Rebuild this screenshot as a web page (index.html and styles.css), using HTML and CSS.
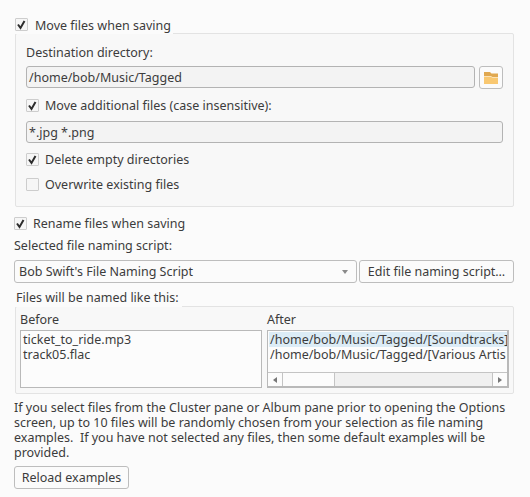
FILE: index.html
```html
<!DOCTYPE html>
<html lang="en">
<head>
    <meta charset="UTF-8">
    <meta name="viewport" content="width=device-width, initial-scale=1.0">
    <link rel="stylesheet" href="styles.css">
    <title>File naming options</title>
</head>
<body>
    <div class="page">

        <div class="check legend">
            <span class="box on"><svg viewBox="0 0 11 11"><path d="M2 5.5 L4.5 9 L8.5 2"/></svg></span>
            <span>Move files when saving</span>
        </div>
        <div class="group move">
            <div class="label">Destination directory:</div>
            <div class="dest_row">
                <div class="input">/home/bob/Music/Tagged</div>
                <button class="folder">
                    <svg viewBox="0 0 14 12" width="14" height="12">
                        <path fill="#e0a850" d="M0 0 H6 L7.5 1.5 H14 V5 H0 Z"/>
                        <path fill="#fbe3b8" d="M0 4 H7 L8.5 5 H14 V6 H0 Z"/>
                        <path fill="#f9c871" d="M0 5 H7 L8.5 6 H14 V12 H0 Z"/>
                    </svg>
                </button>
            </div>
            <div class="check">
                <span class="box on"><svg viewBox="0 0 11 11"><path d="M2 5.5 L4.5 9 L8.5 2"/></svg></span>
                <span>Move additional files (case insensitive):</span>
            </div>
            <div class="input">*.jpg *.png</div>
            <div class="check">
                <span class="box on"><svg viewBox="0 0 11 11"><path d="M2 5.5 L4.5 9 L8.5 2"/></svg></span>
                <span>Delete empty directories</span>
            </div>
            <div class="check">
                <span class="box"></span>
                <span>Overwrite existing files</span>
            </div>
        </div>

        <div class="check rename">
            <span class="box on"><svg viewBox="0 0 11 11"><path d="M2 5.5 L4.5 9 L8.5 2"/></svg></span>
            <span>Rename files when saving</span>
        </div>
        <div class="label script_label">Selected file naming script:</div>
        <div class="script_row">
            <div class="combo">
                <span>Bob Swift's File Naming Script</span>
                <span class="caret"></span>
            </div>
            <button class="btn edit">Edit file naming script…</button>
        </div>

        <div class="label named_label">Files will be named like this:</div>
        <div class="group examples">
            <div class="col">
                <div class="label">Before</div>
                <div class="list">
                    <div class="row">ticket_to_ride.mp3</div>
                    <div class="row">track05.flac</div>
                </div>
            </div>
            <div class="col">
                <div class="label">After</div>
                <div class="list after">
                    <div class="rows">
                        <div class="row sel">/home/bob/Music/Tagged/[Soundtracks]</div>
                        <div class="row">/home/bob/Music/Tagged/[Various Artis</div>
                    </div>
                    <div class="scrollbar">
                        <span class="arrow"><span class="tri left"></span></span>
                        <span class="thumb"></span>
                        <span class="track"></span>
                        <span class="arrow"><span class="tri right"></span></span>
                    </div>
                </div>
            </div>
        </div>

        <p class="help">If you select files from the Cluster pane or Album pane prior to opening the Options<br>screen, up to 10 files will be randomly chosen from your selection as file naming<br>examples.&nbsp; If you have not selected any files, then some default examples will be<br>provided.</p>
        <button class="btn reload">Reload examples</button>
    </div>
</body>
</html>
```
FILE: styles.css
```css
*{
    margin:0;
    padding:0;
    box-sizing: border-box;
}

body{
    background: #fbfbfb;
    color: #3c3c3c;
    font-family: "Noto Sans", "Liberation Sans", sans-serif;
    font-size: 12.5px;
    line-height: 15px;
    height: 497px;
    overflow: hidden;
}

.page{
    padding: 18px 16px 0 14px;
}

.check{
    display: flex;
    align-items: center;
    gap: 6px;
    height: 13px;
    white-space: nowrap;
}

.box{
    flex: none;
    width: 13px;
    height: 13px;
    background: #f6f6f6;
    border: 1px solid #cdcdcd;
    border-radius: 1px;
}

.box svg{
    display: block;
    width: 11px;
    height: 11px;
    fill: none;
    stroke: #2c2c2c;
    stroke-width: 2;
}

/* sits over the top border of the group below it */
.legend{
    position: relative;
    width: 158px;
    height: 16px;
    margin-left: 1px;
    margin-bottom: -1px;
    gap: 7px;
    align-items: flex-start;
    background: #fbfbfb;
}

.group{
    background: #f8f8f8;
    border: 1px solid #e3e3e3;
    border-radius: 2px;
    margin-left: 1px;
}

.move{
    height: 174px;
    padding: 11px 10px 0 10px;
}

.move .label{
    height: 15px;
    margin-bottom: 6px;
}

.dest_row{
    display: flex;
    gap: 4px;
    margin-bottom: 10px;
}

.input{
    flex: 1;
    height: 22px;
    line-height: 21px;
    padding-left: 2px;
    background: #f3f3f3;
    border: 1px solid #b3b3b3;
    border-radius: 3px;
    white-space: nowrap;
}

.move > .input{
    margin: 9px 0 10px 0;
}

.move .check + .check{
    margin-top: 12px;
}

.folder{
    flex: none;
    width: 24px;
    height: 23px;
    display: flex;
    align-items: center;
    justify-content: center;
    background: #fbfbfb;
    border: 1px solid #bdbdbd;
    border-radius: 3px;
}

.rename{
    margin-top: 10px;
}

.script_label{
    margin-top: 8px;
}

.script_row{
    display: flex;
    gap: 2px;
    margin-top: 7px;
}

.combo{
    width: 343px;
    height: 23px;
    display: flex;
    align-items: center;
    justify-content: space-between;
    padding: 0 8px 0 4px;
    background: #fbfbfb;
    border: 1px solid #bdbdbd;
    border-radius: 3px;
}

.caret{
    width: 0;
    height: 0;
    border-left: 3.5px solid transparent;
    border-right: 3.5px solid transparent;
    border-top: 4px solid #8a8a8a;
}

.btn{
    height: 23px;
    background: #fbfbfb;
    color: #3c3c3c;
    font: inherit;
    border: 1px solid #bdbdbd;
    border-radius: 3px;
}

.edit{
    width: 155px;
}

/* same as .legend, covers the group border */
.named_label{
    position: relative;
    width: 167px;
    height: 17px;
    margin: 7px 0 -1px 1px;
    padding-left: 1px;
    background: #fbfbfb;
}

.examples{
    height: 88px;
    display: grid;
    grid-template-columns: 242px 242px;
    gap: 5px;
    padding: 5px 4px 0 4px;
}

.col .label{
    height: 18px;
}

.list{
    height: 58px;
    background: #fcfcfc;
    border: 1px solid #b9b9b9;
    padding: 1px 3px 0 1px;
    overflow: hidden;
}

.row{
    white-space: nowrap;
    padding-left: 1px;
    height: 15px;
}

.list.after{
    display: flex;
    flex-direction: column;
    border-width: 1px 2px 2px 1px;
    padding: 0;
}

.rows{
    flex: 1;
    overflow: hidden;
    padding: 1px 0 0 1px;
}

.sel{
    background: #dcecf6;
    width: 238px;
    overflow: hidden;
}

.scrollbar{
    flex: none;
    display: flex;
    height: 14px;
    background: #f0f0f0;
    border-top: 1px solid #c4c4c4;
}

.arrow{
    flex: none;
    width: 14px;
    display: flex;
    align-items: center;
    justify-content: center;
    background: #fcfcfc;
}

.tri{
    width: 0;
    height: 0;
    border-top: 3.5px solid transparent;
    border-bottom: 3.5px solid transparent;
}

.tri.left{
    border-right: 4px solid #777;
}

.tri.right{
    border-left: 4px solid #777;
}

.thumb{
    flex: none;
    width: 53px;
    background: #fcfcfc;
    border-left: 1px solid #c4c4c4;
    border-right: 1px solid #c4c4c4;
}

.track{
    flex: 1;
    border-right: 1px solid #c4c4c4;
}

.help{
    margin-top: 6px;
    white-space: nowrap;
}

.reload{
    display: block;
    width: 115px;
    margin-top: 6px;
}
```
